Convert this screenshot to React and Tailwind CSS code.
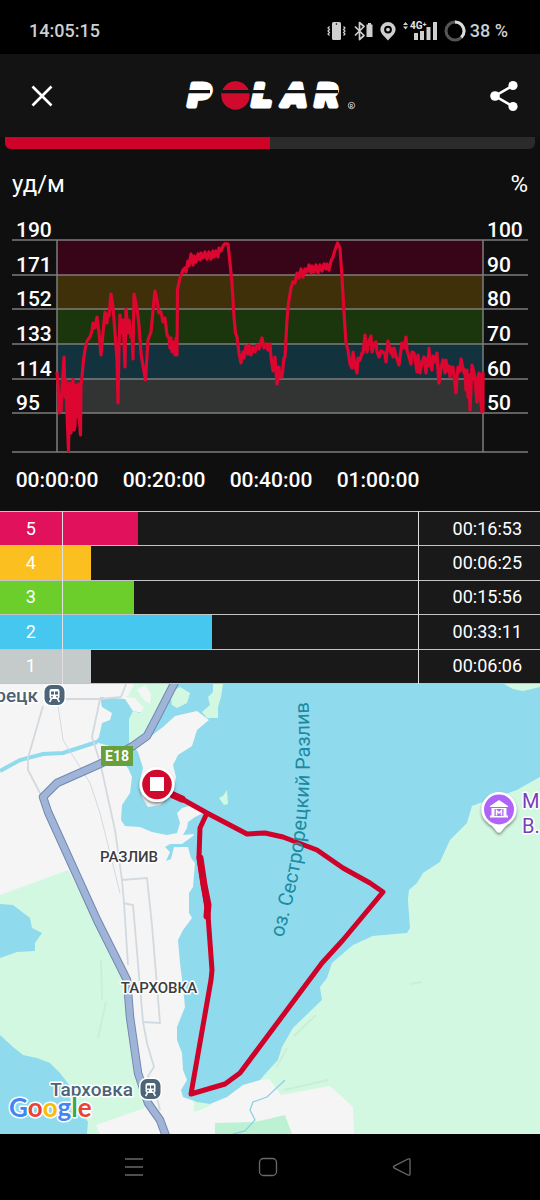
import React from "react";

const zones = [
  { zone: 5, time: "00:16:53", share: 21.2, fill: "bg-[#e2115c]" },
  { zone: 4, time: "00:06:25", share: 8.1, fill: "bg-[#fbc01f]" },
  { zone: 3, time: "00:15:56", share: 20.2, fill: "bg-[#6bce2b]" },
  { zone: 2, time: "00:33:11", share: 42, fill: "bg-[#46c7ef]" },
  { zone: 1, time: "00:06:06", share: 8.1, fill: "bg-[#c5cbca]" },
];

const gridLines = [
  { y: 240, bpm: "190", pct: "100" },
  { y: 275, bpm: "171", pct: "90" },
  { y: 309, bpm: "152", pct: "80" },
  { y: 344, bpm: "133", pct: "70" },
  { y: 379, bpm: "114", pct: "60" },
  { y: 413, bpm: "95", pct: "50" },
  { y: 452 },
];

const bands = [
  { y: 240, h: 35, color: "#380417" },
  { y: 275, h: 34, color: "#3f300a" },
  { y: 309, h: 35, color: "#1b350c" },
  { y: 344, h: 35, color: "#12323d" },
  { y: 379, h: 34, color: "#323433" },
];

const times = [
  { x: 57, label: "00:00:00" },
  { x: 164, label: "00:20:00" },
  { x: 271, label: "00:40:00" },
  { x: 378, label: "01:00:00" },
];

const heartRate =
  "57,372 58,385 59,413 60,395 61,411 62,390 64,357 65,397 66,380 67,413 68.5,451 69.5,383 70,425 71,433 72,400 73,379 74,430 75,426 76,385 77,417 78.5,384 79,415 80.5,435 81,384 82,377 83.5,360 85,350 87,341 90,337 92,331 93,323 95,328 97,317 99,333 101,355 103,333 105,312 107,323 108,314 109,316 111,294 113,307 115,333 117,360 118,403 119,350 120,315 121,333 123,320 125,367 126,309 127,320 128,333 129,320 131,337 132,333 133,359 134,294 137,308 139,325 141,353 143,366 145.5,380 148,340 151,332 154,300 155,291 157,300 159,313 161,312 163,322 165,318 167,335 169,338 170,348 171,338 172,352 174,342 175,355 176,338 177,355 177.5,290 180,278 183,270 185,268 186,272 188,261 189,266 191,254 193,265 194,256 196,262 198,254 200,260 201,253 203,258 205,252 207,259 209,252 211,259 213,251 214,257 216,251 218,257 219,248 221,251 223,246 225,243.5 228,244 230,263 232,283 234,317 235.5,333 237,337 239,353 241,363 243,352 244,358 246,346 248,354 249,345 251,355 253,347 255,352 257,345 259,349 262,338 264,348 266,344 268,350 270,344 271,357 273,371 275,357 277,384 279,367 280,377 282,377 284,358 285,357 287,320 288.5,303 291,288 293,282 295,283 297,273 299,278 301,269 303,277 305,269 307,272 309,265 311,273 312,266 314,272 316,265 318,273 320,265 322,271 324,264 326,269 327,264 329,270 331,261 333,257 335,250 337.5,243 340,248 342,277 344,313 346,343 348,350 350,364 352,368 353,352 355,366 357,373 358,358 360,360 362,353 363,353 365,335 367,352 368,344 371,336 372,352 374,344 376,342 377,352 379,357 381,351 383,352 385,354 386,362 388,341 391,353 392,349 393,357 394,348 396,356 399,365 401,350 402,343 404,348 406,337 407,350 409,357 411,364 412,352 414,353 416,365 417,372 418,355 420,373 422,362 424,357 426,373 427,358 428,366 429,348 430,364 432,370 433,356 435,362 437,353 438,372 439,383 441,368 443,360 445,373 446,360 447,371 449,366 450,377 452,367 453,367 454,376 456,393 457,377 458,367 460,371 461,359 464,373 465,370 466,390 467,370 468,397 469,375 470,410 472,365 474,373 475,378 477,402 478,378 479,373 480,395 482,412 482,375 483,373 483,412";

function StatusIcons() {
  return (
    <div className="flex items-center gap-[7px]">
      <svg className="h-5 w-5" viewBox="0 0 20 20" aria-hidden="true">
        <rect x="5" y="1" width="9" height="18" rx="1.5" fill="#cfcfcf" />
        <circle cx="9.5" cy="3" r="0.8" fill="#000" />
        <path d="M2.500 5.500l-1.500 1.500 1.500 1.500-1.500 1.500 1.500 1.500-1.500 1.500 1.500 1.500M16.500 5.500l1.500 1.500-1.500 1.500 1.500 1.500-1.500 1.500 1.500 1.500-1.500 1.500" fill="none" stroke="#cfcfcf" strokeWidth="1.200" />
      </svg>
      <svg className="h-5 w-[19px]" viewBox="0 0 19 20" aria-hidden="true">
        <path d="M1 5.500l9 9-4.500 4v-17l4.500 4-9 9" fill="none" stroke="#cfcfcf" strokeWidth="1.700" strokeLinejoin="round" />
        <path d="M14 2h3v1.500h1.500v12.500h-6v-12.500h1.500z" fill="#cfcfcf" />
      </svg>
      <svg className="h-5 w-4" viewBox="0 0 16 20" aria-hidden="true">
        <path fillRule="evenodd" fill="#cfcfcf" d="M8 1a7.600 7.600 0 0 1 7.600 7.600c0 4-4 7-7.600 10.900c-3.600-3.900-7.600-6.900-7.600-10.900A7.600 7.600 0 0 1 8 1zM8 4.700a3.900 3.900 0 1 0 0 7.800a3.900 3.900 0 1 0 0-7.800z" />
        <circle cx="8" cy="8.600" r="1.900" fill="#cfcfcf" />
      </svg>
      <svg className="h-5 w-[34px] overflow-visible" viewBox="0 0 34 20" aria-hidden="true">
        <path d="M0 4L2.500 1L5 4zM0 5.500L2.500 8.500L5 5.500z" fill="#cfcfcf" />
        <path d="M11 12h4v7h-4zM17 10h4v9h-4zM23.500 6h4v13h-4zM30 1h4v18h-4z" fill="#cfcfcf" />
        <text x="7" y="8" fontSize="10" fontWeight="700" fill="#e2e2e2" stroke="#000" strokeWidth="2" paintOrder="stroke">4G⁺</text>
      </svg>
      <div className="flex items-center gap-1">
        <svg className="h-[22px] w-[22px]" viewBox="0 0 22 22" aria-hidden="true">
          <circle cx="11" cy="11" r="9" fill="none" stroke="#555" strokeWidth="3" />
          <path d="M11 2a9 9 0 0 1 6.300 15.400" fill="none" stroke="#dcdcdc" strokeWidth="3" />
        </svg>
        <span className="text-lg font-medium">38 %</span>
      </div>
    </div>
  );
}

function Logo() {
  return (
    <svg className="h-12 w-[180px]" viewBox="183 72 180 48" role="img" aria-label="Polar">
      <g fontFamily="DejaVu Sans" fontWeight="700" fontStyle="italic" fontSize="31" fill="#fff" stroke="#fff" strokeWidth="5" strokeLinejoin="round">
        <text x="188" y="106">P</text>
        <text x="252" y="106">L</text>
        <text x="283" y="106">A</text>
        <text x="315" y="106">R</text>
      </g>
      <circle cx="235.500" cy="95.500" r="15.500" fill="#131313" />
      <circle cx="235.500" cy="95.500" r="14.200" fill="#cf0a2c" />
      <path d="M184 90h26v3.300h-26zM222 90h84v3.300h-84zM310 90h28v3.300h-28z" fill="#131313" />
      <circle cx="351.500" cy="105.500" r="3.200" fill="none" stroke="#fff" strokeWidth="0.700" />
      <text x="349.800" y="107.500" fontSize="5" fill="#fff">R</text>
    </svg>
  );
}

function HeartRateChart() {
  return (
    <svg className="block w-full" viewBox="0 210 540 301" role="img" aria-label="уд/м">
      {bands.map((b) => (
        <rect key={b.y} x="57" y={b.y} width="426" height={b.h} fill={b.color} />
      ))}
      <rect x="57" y="413" width="426" height="39" fill="#141414" />
      {gridLines.map((g) => (
        <path key={g.y} d={`M12 ${g.y}H528`} stroke="#7d7d7d" strokeWidth="1.300" />
      ))}
      <path d="M57 240V452M483 240V452" stroke="#7d7d7d" strokeWidth="1.500" />
      <polyline points={heartRate} fill="none" stroke="#dc0630" strokeWidth="3.200" strokeLinejoin="round" />
      <g fill="#fff" fontSize="21" fontWeight="500">
        {gridLines.filter((g) => g.bpm).map((g) => (
          <g key={g.y}>
            <text x="16" y={g.y - 3}>{g.bpm}</text>
            <text x="487" y={g.y - 3}>{g.pct}</text>
          </g>
        ))}
        {times.map((t) => (
          <text key={t.label} x={t.x} y="487" textAnchor="middle">{t.label}</text>
        ))}
      </g>
    </svg>
  );
}

function Station({ x, y }) {
  return (
    <g transform={`translate(${x} ${y})`}>
      <rect x="-11.500" y="-11.500" width="23" height="23" rx="8" fill="#fff" />
      <rect x="-10" y="-10" width="20" height="20" rx="6.500" fill="#4b6477" />
      <path d="M-3-6h6a2 2 0 0 1 2 2v6a2 2 0 0 1-2 2h-6a2 2 0 0 1-2-2v-6a2 2 0 0 1 2-2z" fill="#fff" />
      <path d="M-3.500-3.500h3v3h-3zM.5-3.500h3v3h-3z" fill="#4b6477" />
      <circle cx="-2.500" cy="1.700" r="0.900" fill="#4b6477" />
      <circle cx="2.500" cy="1.700" r="0.900" fill="#4b6477" />
      <path d="M-3 4l-2 3M3 4l2 3" stroke="#fff" strokeWidth="1.500" />
    </g>
  );
}

function RouteMap() {
  return (
    <svg className="block w-full bg-[#f5f5f5]" viewBox="0 684 540 450" role="img" aria-label="оз. Сестрорецкий Разлив">
      <defs>
        <path id="lake-label" d="M283 938C301 872 315 812 308 696" />
        <filter id="soft" x="-30%" y="-30%" width="160%" height="170%">
          <feDropShadow dx="0" dy="2" stdDeviation="1.500" floodOpacity="0.450" />
        </filter>
      </defs>

      {/* Parks and woodland */}
      <g fill="#d3f8e2">
        <path d="M0 895L68 870L97 925L125 980L130 1015L136 1060L145 1108L96 1125L100 1134H0z" />
        <path d="M540 777L517 790L472 806L467 823L460 830L450 840L440 862L423 873L417 883L409 890L408 900L410 928L407 933L373 936L353 945L332 963L327 978L320 987L322 1000L293 1028L282 1047L278 1060L267 1072L260 1080L269 1079L281 1095L330 1086L353 1107L354 1134H540z" />
        <path d="M194 1100L213 1104L203 1109L194 1112z" />
      </g>
      <path d="M215 1123L255 1122L285 1115L292 1134H215z" fill="#bdf1d3" />

      {/* Water */}
      <g fill="#90daee">
        <path d="M173 684L160 711L143 713L133 711L125 699L100 697L102 707L112 713L110 720L102 723L99 737L95 742L113 747L120 760L128 768L132 777L130 793L122 805L121 820L125 826L140 827L152 832L167 835L177 833L180 823L177 813L182 808L192 805L200 807L205 812L195 817L188 822L187 828L183 835L194 834L193 836L182 844L170 844L165 847L170 852L166 861L171 859L174 847L188 847L191 858L195 863L193 887L189 893L189 913L192 918L183 930L178 940L180 963L183 987L185 1007L177 1027L177 1040L182 1053L183 1070L187 1080L181 1090L183 1097L197 1102L210 1104L227 1097L243 1085L260 1080L267 1072L278 1060L282 1047L293 1028L322 1000L320 987L327 978L332 963L353 945L373 936L407 933L410 928L408 900L409 890L417 883L423 873L440 862L450 840L460 830L467 823L472 806L517 790L540 777V684z" />
        <path d="M0 904L13 905L30 918L32 928L42 933L35 943L35 951L17 952L0 958z" />
        <path d="M0 1035L13 1047L23 1055L37 1058L50 1063L60 1073L70 1086L80 1110L88 1122L87 1134H0z" />
      </g>

      {/* Peninsula, shores and the island */}
      <path d="M146 740L163 727L175 716L197 711L209 720L197 730L192 746L178 755L173 765L176 777L173 793L160 805L148 807L142 797L140 780L143 768L138 752L133 746z" fill="#f5f5f5" />
      <g fill="#d3f8e2">
        <path d="M129 684H173L165 700L152 733L145 740L129 748V719L133 711L140 713L144 708L135 698L126 697z" />
        <path d="M170 693L180 687L190 693L187 703L177 708L172 705z" />
        <path d="M213 684H223L221 697L218 707L218 718L207 718L202 712L210 705L208 697L213 692z" />
        <path d="M219 798L223 796L227 790L228 804L224 805z" />
        <path d="M504 684L513 689L523 691L540 687V684z" />
      </g>
      <path d="M126 684H134L128 696L104 699V684zM137 690L145 685L151 694L150 704L144 700z" fill="#f5f5f5" />
      <path d="M294 1036L316 1015M276 1068L287 1048M284 1090L328 1080M101 960L102 1000M106 1002L98 1038M410 984L422 982" stroke="#c9efd8" strokeWidth="2" fill="none" />

      {/* Rivers */}
      <path d="M0 771L20 760L43 754L63 753L97 742" fill="none" stroke="#90daee" strokeWidth="4" />
      <path d="M285 1080L267 1097L253 1102L250 1110L255 1120L245 1131L233 1134" fill="none" stroke="#8fcfe6" strokeWidth="1.300" />

      {/* Streets */}
      <g fill="none" stroke="#d3dadf" strokeWidth="1.800">
        <path d="M43 706L28 758V770L41 795" />
        <path d="M62 699H100L121 697L126 684" />
        <path d="M100 699L92 737L100 762L115 830L122 880L124 903L128 965" />
        <path d="M58 705L63 740L90 783L100 813L120 893" strokeWidth="1" />
        <path d="M121 880L147 878L152 925L160 1023L143 1022" />
        <path d="M123 903L133 905L143 1022L147 1043L154 1067L148 1076L155 1090L160 1110" />
      </g>
      <path d="M177 678L157 717L147 736L133 746L102 763L57 783L43 797L48 812L97 920L127 980L130 1017L138 1073L148 1103L160 1120L166 1136" fill="none" stroke="#7188b2" strokeWidth="8.500" strokeLinejoin="round" />
      <path d="M177 678L157 717L147 736L133 746L102 763L57 783L43 797L48 812L97 920L127 980L130 1017L138 1073L148 1103L160 1120L166 1136" fill="none" stroke="#a0b4d7" strokeWidth="6.500" strokeLinejoin="round" />

      {/* Recorded track */}
      <g fill="none" stroke="#cf0229" strokeWidth="5" strokeLinejoin="round" strokeLinecap="round">
        <path d="M157 785L173 794L207 813L247 834L265 833L283 837L317 850L343 868L370 883L383 892L343 940L322 963L240 1073L225 1084L191 1094L211 980L212 970L208 915L199 857L200 828L207 813" />
        <path d="M173 795L182 799M200 858L204 885L208 905L207 916" strokeWidth="7" />
      </g>
      <g filter="url(#soft)">
        <circle cx="157" cy="784.500" r="17.500" fill="#fff" />
      </g>
      <circle cx="157" cy="784.500" r="14.800" fill="#cf0a2c" />
      <rect x="150" y="777" width="14" height="14" fill="#fff" />

      {/* Labels */}
      <text fontSize="20" fill="#1b8ba0">
        <textPath href="#lake-label">оз. Сестрорецкий Разлив</textPath>
      </text>
      <rect x="101" y="746" width="32" height="20" fill="#67a03c" />
      <text x="117" y="761" fontSize="14" fontWeight="700" fill="#fff" textAnchor="middle">E18</text>
      <g stroke="#fff" strokeWidth="3" strokeLinejoin="round" paintOrder="stroke" fontWeight="500">
        <g fontSize="15" fill="#3b3d40" textAnchor="middle">
          <text x="129" y="862">РАЗЛИВ</text>
          <text x="159" y="993">ТАРХОВКА</text>
        </g>
        <g fontSize="19" fill="#4b6477" textAnchor="end">
          <text x="38" y="702">рецк</text>
          <text x="133" y="1096">Тарховка</text>
        </g>
        <g fontSize="20" fill="#7440b8" fontWeight="400">
          <text x="522" y="808">М</text>
          <text x="522" y="833">В.</text>
        </g>
      </g>
      <Station x={54.5} y={695} />
      <Station x={150.5} y={1089} />
      <g filter="url(#soft)">
        <path d="M499 792a17.500 17.500 0 0 1 17.500 17.500c0 9-6 13-11 16.500l-4 5q-2.500 3-5 0l-4-5c-5-3.500-11-7.500-11-16.500A17.500 17.500 0 0 1 499 792z" fill="#fff" />
      </g>
      <circle cx="499" cy="809.500" r="15" fill="#b063f7" />
      <path d="M490 806L499 800L508 806V807H490zM491.500 808h15v7.500h1.500v2h-18v-2h1.500z" fill="#fff" />
      <path d="M494.500 809h9v7h-9z" fill="#b063f7" />
      <path d="M496.500 815.500v-5l2.500 2.500 2.500-2.500v5" fill="none" stroke="#fff" strokeWidth="1.500" />
      <text x="9" y="1117" fontSize="26" fontFamily="Lato" fontWeight="700" stroke="#fff" strokeWidth="3" paintOrder="stroke" strokeLinejoin="round">
        <tspan fill="#4285f4">G</tspan>
        <tspan fill="#ea4335">o</tspan>
        <tspan fill="#fbbc05">o</tspan>
        <tspan fill="#4285f4">g</tspan>
        <tspan fill="#34a853">l</tspan>
        <tspan fill="#ea4335">e</tspan>
      </text>
    </svg>
  );
}

export default function App() {
  return (
    <div className="flex min-h-screen w-full flex-col bg-[#0f0f0f] font-[Roboto,sans-serif] text-white">
      <div className="flex h-[54px] items-center justify-between bg-black pt-2 pr-8 pl-[29px] text-[#cfcfcf]">
        <span className="text-lg font-medium">14:05:15</span>
        <StatusIcons />
      </div>

      <header className="flex h-[83px] items-center justify-between bg-[#131313] pr-[14px] pl-5">
        <button type="button" aria-label="Закрыть" className="flex size-11 items-center justify-center">
          <svg className="size-6" viewBox="0 0 24 24" fill="none" stroke="#fff" strokeWidth="2.600" aria-hidden="true">
            <path d="M2.500 2.500L21.500 21.500M21.500 2.500L2.500 21.500" />
          </svg>
        </button>
        <Logo />
        <button type="button" aria-label="Поделиться" className="flex size-11 items-center justify-center">
          <svg className="size-8" viewBox="0 0 32 32" fill="#fff" aria-hidden="true">
            <path d="M25 5.500L7 16L25 26.500" fill="none" stroke="#fff" strokeWidth="2.600" />
            <circle cx="25" cy="5.500" r="4.600" />
            <circle cx="7" cy="16" r="4.800" />
            <circle cx="25" cy="26.500" r="4.600" />
          </svg>
        </button>
      </header>

      <div className="px-[5px]">
        <div className="h-3 overflow-hidden rounded-b-md bg-[#2b2b2b]">
          <div className="h-full w-1/2 bg-[#cf0229]" />
        </div>
      </div>

      <div className="flex h-[61px] items-center justify-between px-3 pt-2 text-2xl">
        <span>уд/м</span>
        <span>%</span>
      </div>
      <HeartRateChart />

      <table className="h-[173px] w-full table-fixed border-collapse bg-[#191919] text-lg">
        <colgroup>
          <col className="w-[62px]" />
          <col />
          <col className="w-[122px]" />
        </colgroup>
        <tbody>
          {zones.map((z) => (
            <tr key={z.zone} className="border-y border-[#c4c4c4]">
              <th scope="row" className={`p-0 font-normal ${z.fill}`}>{z.zone}</th>
              <td className="h-px border-x border-[#e0e0e0] p-0">
                <div className={`h-full ${z.fill}`} style={{ width: `${z.share}%` }} />
              </td>
              <td className="p-0 pr-[18px] text-right">{z.time}</td>
            </tr>
          ))}
        </tbody>
      </table>

      <RouteMap />

      <nav className="flex h-[66px] items-center justify-center gap-[110px] bg-black pr-1">
        <button type="button" aria-label="Недавние">
          <svg className="size-6" viewBox="0 0 24 24" fill="none" stroke="#6a6a6a" strokeWidth="1.300" aria-hidden="true">
            <path d="M3 4H21M3 12H21M3 20H21" />
          </svg>
        </button>
        <button type="button" aria-label="Домой">
          <svg className="size-6" viewBox="0 0 24 24" fill="none" stroke="#6a6a6a" strokeWidth="1.300" aria-hidden="true">
            <rect x="3.500" y="3.500" width="17" height="17" rx="4" />
          </svg>
        </button>
        <button type="button" aria-label="Назад">
          <svg className="size-6" viewBox="0 0 24 24" fill="none" stroke="#6a6a6a" strokeWidth="1.300" strokeLinejoin="round" aria-hidden="true">
            <path d="M4 11.200Q3 12 4 12.800L18 20Q20 20.600 20 19V5Q20 3.400 18 4z" />
          </svg>
        </button>
      </nav>
    </div>
  );
}
